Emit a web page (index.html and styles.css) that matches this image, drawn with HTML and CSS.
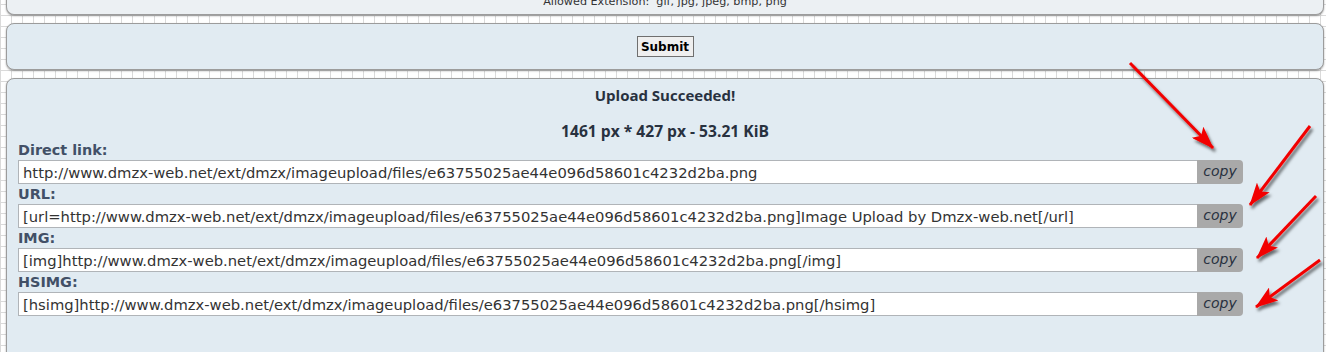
FILE: index.html
```html
<!DOCTYPE html>
<html lang="en">
<head>
    <meta charset="UTF-8">
    <title>Image Upload</title>
    <link rel="stylesheet" href="styles.css">
</head>
<body>
    <div class="wrap">
        <div class="panel panel-top">
            <p class="allowed">Allowed Extension:&nbsp; gif, jpg, jpeg, bmp, png</p>
        </div>
        <div class="panel panel-submit">
            <button class="submit">Submit</button>
        </div>
        <div class="panel panel-result">
            <h3 class="title">Upload Succeeded!</h3>
            <p class="stats">1461 px * 427 px - 53.21 KiB</p>

            <div class="link-row">
                <label>Direct link:</label>
                <div class="field">
                    <input type="text" value="http://www.dmzx-web.net/ext/dmzx/imageupload/files/e63755025ae44e096d58601c4232d2ba.png">
                    <span class="copy">copy</span>
                </div>
            </div>
            <div class="link-row">
                <label>URL:</label>
                <div class="field">
                    <input type="text" value="[url=http://www.dmzx-web.net/ext/dmzx/imageupload/files/e63755025ae44e096d58601c4232d2ba.png]Image Upload by Dmzx-web.net[/url]">
                    <span class="copy">copy</span>
                </div>
            </div>
            <div class="link-row">
                <label>IMG:</label>
                <div class="field">
                    <input type="text" value="[img]http://www.dmzx-web.net/ext/dmzx/imageupload/files/e63755025ae44e096d58601c4232d2ba.png[/img]">
                    <span class="copy">copy</span>
                </div>
            </div>
            <div class="link-row">
                <label>HSIMG:</label>
                <div class="field">
                    <input type="text" value="[hsimg]http://www.dmzx-web.net/ext/dmzx/imageupload/files/e63755025ae44e096d58601c4232d2ba.png[/hsimg]">
                    <span class="copy">copy</span>
                </div>
            </div>
        </div>
    </div>

    <!-- annotation arrows drawn over the page -->
    <svg class="arrows" width="1326" height="352" viewBox="0 0 1326 352">
        <defs>
            <marker id="head" markerWidth="24" markerHeight="16" refX="22" refY="8" orient="auto" markerUnits="userSpaceOnUse">
                <path d="M0,0 L23,8 L0,16 L5,8 z" fill="#f20000"/>
            </marker>
            <filter id="shadow" x="-20%" y="-20%" width="140%" height="140%">
                <feDropShadow dx="2" dy="3" stdDeviation="1.6" flood-color="#000" flood-opacity="0.55"/>
            </filter>
        </defs>
        <g stroke="#f20000" stroke-width="3" filter="url(#shadow)" marker-end="url(#head)">
            <line x1="1130" y1="63" x2="1213" y2="148"/>
            <line x1="1310" y1="126" x2="1250" y2="205"/>
            <line x1="1316" y1="196" x2="1257" y2="258"/>
            <line x1="1320" y1="260" x2="1256" y2="307"/>
        </g>
    </svg>
</body>
</html>
```
FILE: styles.css
```css
body {
    margin: 0;
    padding: 0;
    overflow: hidden;
    font-family: "DejaVu Sans", Verdana, sans-serif;
    color: #333;
    background-color: #fff;
    background-image:
        linear-gradient(90deg, #dadada 1px, transparent 1px),
        linear-gradient(#dadada 1px, transparent 1px);
    background-size: 11px 11px;
    background-position: 0 4px;
}
.wrap {
    padding: 0 2px 0 6px;
}
.panel {
    background-color: #e1ebf2;
    border: 1px solid #9c9c9c;
    border-radius: 8px;
    box-shadow: 0 1px 2px rgba(0, 0, 0, 0.35);
    margin-bottom: 8px;
    box-sizing: border-box;
}
.panel-top {
    background-color: #ecf0f3;
    margin-top: -12px;
    height: 27px;
    padding-top: 7px;
    border-top: none;
    border-radius: 0 0 8px 8px;
}
.allowed {
    margin: 0;
    text-align: center;
    font-size: 11.2px;
    line-height: 14px;
    white-space: pre;
}
.panel-submit {
    height: 47px;
    display: flex;
    align-items: center;
    justify-content: center;
}
.submit {
    height: 21px;
    width: 57px;
    padding: 0;
    font-family: "DejaVu Sans", Verdana, sans-serif;
    font-size: 12px;
    font-weight: bold;
    color: #000;
    background-color: #efefef;
    border: 1px solid #6f6f6f;
    border-radius: 0;
}
.panel-result {
    padding: 7px 11px 60px 11px;
}
.title, .stats {
    margin: 0;
    text-align: center;
    font-family: "Open Sans", "DejaVu Sans", sans-serif;
    font-weight: bold;
    font-size: 15px;
    line-height: 18px;
    color: #28313f;
}
.stats {
    margin-top: 18px;
    font-size: 15.6px;
}
.link-row label {
    display: block;
    font-size: 14.4px;
    font-weight: bold;
    line-height: 20px;
    color: #425067;
}
.field {
    display: flex;
    width: 1225px;
}
.field input {
    width: 1179px;
    height: 24px;
    box-sizing: border-box;
    margin: 0;
    padding: 0 4px;
    font-family: "DejaVu Sans", Verdana, sans-serif;
    font-size: 14.75px;
    color: #333;
    background: #fff;
    border: 1px solid #b0b4b8;
    border-right: none;
    outline: none;
}
.copy {
    width: 46px;
    height: 24px;
    line-height: 23px;
    text-align: center;
    font-size: 14px;
    font-style: italic;
    color: #28313f;
    background-color: #a9a9a9;
    border-radius: 0 4px 4px 0;
}
.arrows {
    position: absolute;
    top: 0;
    left: 0;
    pointer-events: none;
}
```
